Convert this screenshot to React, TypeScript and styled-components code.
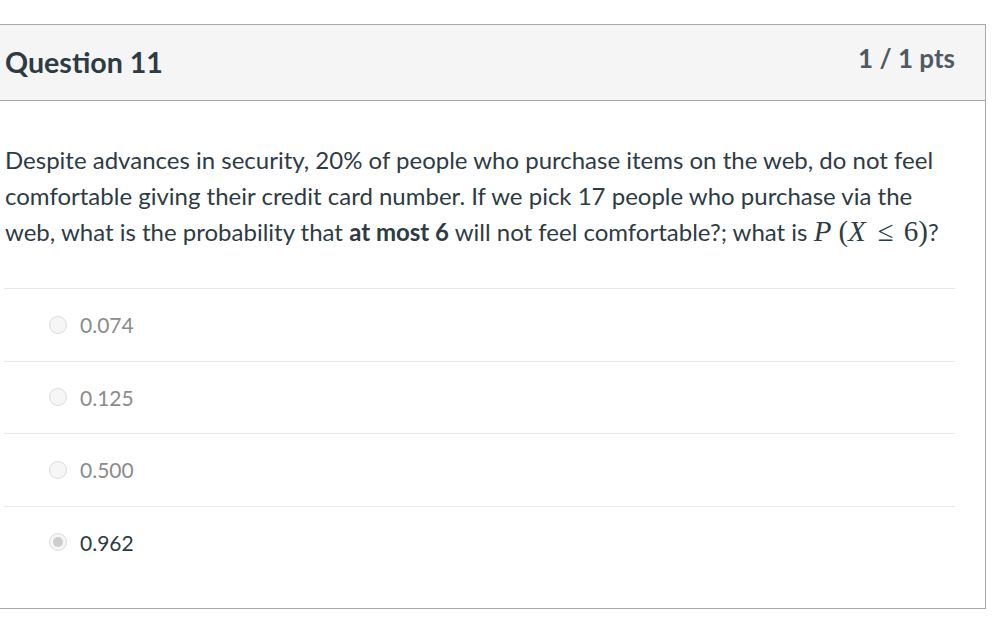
import styled, { createGlobalStyle } from "styled-components";

const Global = createGlobalStyle`
  html, body {
    margin: 0;
    padding: 0;
    background: #fff;
    font-family: Lato, "Open Sans", sans-serif;
    color: #2d3b45;
  }
`;

const Page = styled.div`
  padding-top: 24px;
  width: 993px;
`;

const Card = styled.div`
  margin-left: -1px;
  width: 985px;
  border: 1px solid #a9a9a9;
`;

const Header = styled.div`
  display: flex;
  justify-content: space-between;
  align-items: flex-start;
  height: 76px;
  background: #f5f5f5;
  border-bottom: 1px solid #a9a9a9;
  box-sizing: border-box;
  padding: 0 30px 0 5px;
`;

const Title = styled.h2`
  margin: 20px 0 0;
  font-size: 28.6px;
  font-weight: 700;
  color: #2d3b45;
`;

const Points = styled.div`
  margin-top: 17px;
  font-size: 26px;
  font-weight: 700;
  color: #4f5a63;
`;

const Body = styled.div`
  padding: 41px 30px 30px 6px;
`;

const Question = styled.div`
  font-size: 24px;
  line-height: 36px;
  padding-bottom: 38px;
  border-bottom: 1px solid #e8e8e8;
  margin-left: -2px;
  padding-left: 1px;
  b {
    font-weight: 700;
  }
`;

const Math = styled.span`
  font-family: "Liberation Serif", "Times New Roman", serif;
  font-size: 29px;
  line-height: 1;
`;

const MathVar = styled.i<{ $gap?: number }>`
  font-style: italic;
  margin-right: ${(p) => p.$gap ?? 0}px;
`;

const Leq = styled.span`
  display: inline-block;
  margin: 0 10px 0 12px;
`;

const Answer = styled.label<{ $last?: boolean }>`
  display: flex;
  align-items: center;
  height: 71.5px;
  margin-left: -2px;
  padding-left: 46px;
  border-bottom: ${(p) => (p.$last ? "none" : "1px solid #e8e8e8")};
`;

const Radio = styled.span<{ $checked?: boolean }>`
  width: 18px;
  height: 18px;
  border-radius: 50%;
  border: 1px solid #dcdcdc;
  background: #f6f6f6;
  box-sizing: border-box;
  display: flex;
  align-items: center;
  justify-content: center;
  margin-right: 14px;
  margin-left: -1px;
  &::after {
    content: "";
    width: 10px;
    height: 10px;
    border-radius: 50%;
    background: ${(p) => (p.$checked ? "#cdcdcd" : "transparent")};
  }
`;

const AnswerText = styled.span<{ $checked?: boolean }>`
  font-size: 21px;
  margin-left: -1px;
  color: ${(p) => (p.$checked ? "#2d3b45" : "#8b8b8b")};
`;

const answers = ["0.074", "0.125", "0.500", "0.962"];
const selected = "0.962";

export default function App() {
  return (
    <Page>
      <Global />
      <Card>
        <Header>
          <Title>Question 11</Title>
          <Points>1 / 1 pts</Points>
        </Header>
        <Body>
          <Question>
            Despite advances in security, 20% of people who purchase items on the web, do not feel
            comfortable giving their credit card number. If we pick 17 people who purchase via the
            web, what is the probability that <b>at most 6</b> will not feel comfortable?; what is{" "}
            <Math>
              <MathVar $gap={7}>P</MathVar>(<MathVar>X</MathVar>
              <Leq>≤</Leq>6)
            </Math>
            ?
          </Question>
          {answers.map((a, i) => (
            <Answer key={a} $last={i === answers.length - 1}>
              <Radio $checked={a === selected} />
              <AnswerText $checked={a === selected}>{a}</AnswerText>
            </Answer>
          ))}
        </Body>
      </Card>
    </Page>
  );
}
